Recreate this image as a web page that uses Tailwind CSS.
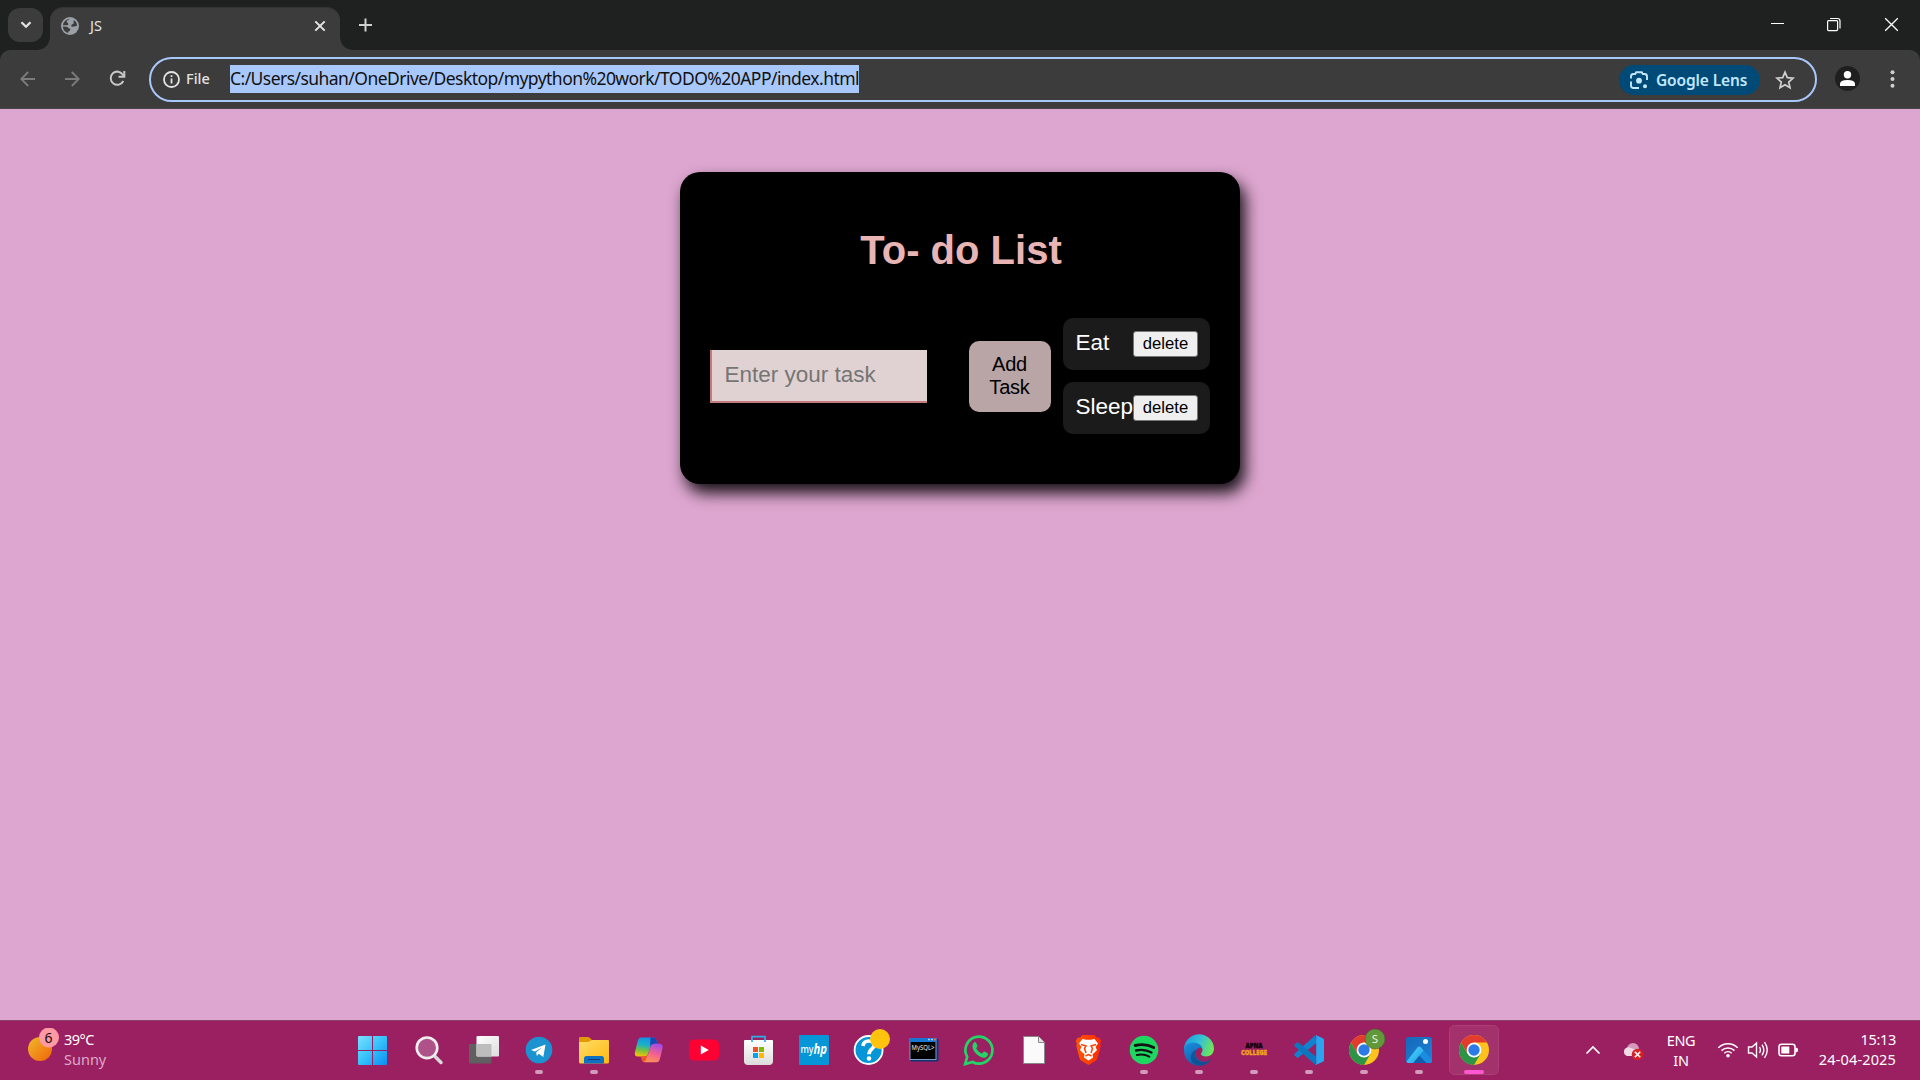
<!DOCTYPE html>
<html lang="en">
<head>
<meta charset="utf-8">
<title>JS</title>
<script src="https://cdn.jsdelivr.net/npm/@tailwindcss/browser@4"></script>
</head>
<body class="w-[1920px] h-[1080px] overflow-hidden flex flex-col bg-[#dda6d0] font-['Noto_Sans',sans-serif]">

<!-- Tab strip -->
<header class="h-[50px] bg-[#1f2120] flex shrink-0">
  <div class="w-[43px] pl-2 pt-2 shrink-0">
    <button class="w-[35px] h-[34px] rounded-xl bg-[#3c3c3c] flex items-center justify-center">
      <svg width="12" height="8" viewBox="0 0 12 8" fill="none" stroke="#e3e3e3" stroke-width="2.3"><path d="M1.500 1.200 6 5.700l4.500-4.500"/></svg>
    </button>
  </div>
  <div class="w-[317px] ml-[-6px] pt-[7px] flex shrink-0">
    <svg class="shrink-0 self-end" width="13" height="15" viewBox="0 0 13 15"><path d="M13 0v15H0Q13 14 13 0Z" fill="#3c3c3c"/></svg>
    <div class="w-[290px] shrink-0 h-[43px] rounded-t-[13px] bg-[#3c3c3c] flex items-center pl-[11px] pr-[14px] pb-[7px] border-t border-[#333]">
      <svg width="18" height="18" viewBox="0 0 18 18"><circle cx="9" cy="9" r="9" fill="#9aa0a6"/><path d="M8.800 1.900C7.600 3 6.400 2.900 5.800 4.300 5.400 5.400 6.600 5.600 7.200 6.500c.6 1-.2 1.600-1.300 1.700L2 8.300A7.100 7.100 0 0 1 8.800 1.900ZM1.900 9.500l3.600.2c1.500.1 1.600 1.600 2.900 1.800 1 .2 1.300.8.700 1.800-.5.800-2 .7-2 2.600A7.100 7.100 0 0 1 1.900 9.500ZM13 3.200c1.800 1.200 3 3.200 3.100 5.300-.8 1-2.200.5-3.200.9-1.200.5-2.500.4-2.700-.6-.2-1.100.9-1.400 1.900-1.800 1.300-.5-.2-2.600.9-3.800Z" fill="#3c3c3c"/></svg>
      <span class="ml-[11px] mb-px text-[14.500px] leading-5 text-[#e3e3e3] grow">JS</span>
      <svg width="12" height="12" viewBox="0 0 12 12" stroke="#e8e8e8" stroke-width="1.900"><path d="m1.300 1.300 9.400 9.400m0-9.400-9.400 9.400"/></svg>
    </div>
    <svg class="shrink-0 self-end" width="13" height="15" viewBox="0 0 13 15"><path d="M0 0v15h13Q0 14 0 0Z" fill="#3c3c3c"/></svg>
  </div>
  <div class="pl-[5px] pt-[18px] grow"><svg width="13" height="14" viewBox="0 0 13 14" stroke="#d0d0d0" stroke-width="2"><path d="M6.500.5v13M0 7h13"/></svg></div>
  <div class="flex gap-[42px] pt-[17px] pr-[21px]">
    <svg width="15" height="15" viewBox="0 0 15 15" stroke="#fff"><path d="M1 6.500h13"/></svg>
    <svg class="relative right-px" width="15" height="15" viewBox="0 0 15 15" stroke="#fff" stroke-width="1.200" fill="none"><rect x="1.600" y="3.600" width="10" height="10" rx="1"/><path d="M4 1.500h7.500q2.500 0 2.500 2.500v7.500"/></svg>
    <svg width="15" height="15" viewBox="0 0 15 15" stroke="#fff" stroke-width="1.300"><path d="m1.200 1.200 12.600 12.600m0-12.600-12.600 12.600"/></svg>
  </div>
</header>

<!-- Toolbar -->
<nav class="h-[59px] bg-[#1f2120] shrink-0">
  <div class="h-[59px] bg-[#3c3c3c] rounded-t-[10px] border-b border-[#474747] flex items-start pl-5 pr-[25px]">
    <svg class="mt-[21px]" width="15" height="16" viewBox="0 0 15 16" fill="none" stroke="#7b7b7b" stroke-width="1.800"><path d="M15 8H1.500M8.200 1 1.300 8l6.900 7"/></svg>
    <svg class="mt-[21px] ml-[30px]" width="15" height="16" viewBox="0 0 15 16" fill="none" stroke="#7b7b7b" stroke-width="1.800"><path d="M0 8h13.500M6.800 1l6.900 7-6.900 7"/></svg>
    <svg class="mt-[20px] ml-[29px]" width="17" height="17" viewBox="0 0 17 17" fill="none" stroke="#c7c7c7" stroke-width="2"><path d="M14.300 11A6.600 6.600 0 1 1 14 4.900L15.300 6.500"/><path d="M15.300 1v5.700H9.500"/></svg>
    <div class="mt-[7px] ml-[23px] w-[1668px] h-[45px] rounded-full border-2 border-[#a8c7fa] flex items-center pl-3 pr-5">
      <svg width="17" height="17" viewBox="0 0 17 17" fill="none" stroke="#e3e3e3" stroke-width="1.800"><circle cx="8.500" cy="8.500" r="7.500"/><path d="M8.500 7.500v5M8.500 4.200v1.900"/></svg>
      <span class="ml-[6px] mb-[3px] w-[44px] text-[14.500px] leading-5 font-medium text-[#e3e3e3]">File</span>
      <span class="mb-px w-[629px] h-7 bg-[#a8c7fa] text-[#111] text-[17.500px] leading-[27px] whitespace-nowrap tracking-[-0.550px]">C:/Users/suhan/OneDrive/Desktop/mypython%20work/TODO%20APP/index.html</span>
      <div class="grow"></div>
      <div class="w-[141px] h-[30px] rounded-full bg-[#004a77] flex items-center pl-[11px] text-[#c2e7ff]">
        <svg width="18" height="18" viewBox="0 0 18 18" fill="none" stroke="#c2e7ff" stroke-width="1.900"><path d="M1 7.500V5.500Q1 3 3.500 3h1.700l1-1.800h5.600l1 1.800h1.700Q17 3 17 5.500V9M1 10.500v4Q1 17 3.500 17H9"/><circle cx="9" cy="9.700" r="2.900" fill="#c2e7ff" stroke="none"/><circle cx="15" cy="15.200" r="2" fill="#c2e7ff" stroke="none"/></svg>
        <span class="ml-2 text-[15.500px] leading-5 font-semibold whitespace-nowrap tracking-[-0.130px]">Google Lens</span>
      </div>
      <svg class="ml-[15px]" width="20" height="20" viewBox="0 0 20 20" fill="none" stroke="#d0d0d0" stroke-width="1.700"><path d="m10 2.200 2.300 5.400 5.800.5-4.400 3.900 1.300 5.700-5-3-5 3L6.300 12 1.900 8.100l5.800-.5Z"/></svg>
    </div>
    <svg class="mt-4 ml-[18px]" width="25" height="25" viewBox="0 0 25 25"><circle cx="12.500" cy="12.500" r="12.500" fill="#1f1f1f"/><g fill="#fff"><circle cx="12.500" cy="8.700" r="3.700"/><path d="M5 20v-2.200Q5 14 12.500 14T20 17.800V20Z"/></g></svg>
    <svg class="mt-5 ml-[30px]" width="5" height="18" viewBox="0 0 5 18" fill="#d0d0d0"><circle cx="2.500" cy="2.200" r="2"/><circle cx="2.500" cy="9" r="2"/><circle cx="2.500" cy="15.800" r="2"/></svg>
  </div>
</nav>

<!-- Page -->
<main class="grow pt-[63px] flex justify-center items-start font-['Liberation_Sans',sans-serif]">
  <section class="w-[560px] h-[312px] rounded-[20px] bg-black px-[30px] pt-[55px] shadow-[5px_9px_16px_rgba(0,0,0,0.9)]">
    <h1 class="pl-[2px] text-center text-[40px] leading-[46px] font-bold text-[#e8b4b4]">To- do List</h1>
    <div class="flex mt-[45px] items-start">
      <input type="text" placeholder="Enter your task" class="mt-8 w-[217px] h-[53px] bg-[#e0d2d2] border-l-2 border-b-2 border-[#c47a7a] pl-[12.500px] pb-[2px] text-[22.500px] placeholder:text-[#757575]">
      <button class="mt-[23px] ml-[42px] w-[82px] h-[71px] rounded-[10px] bg-[#b9a5a5] text-black text-[20px] leading-[23px] pb-[2px] pr-px tracking-[-0.200px]">Add<br>Task</button>
      <ul class="ml-3 w-[147px] flex flex-col gap-3 text-white text-[22.500px] leading-[26px]">
        <li class="h-[52px] rounded-[10px] bg-[#1b1b1b] flex items-center justify-between pl-[12.500px] pr-3"><span class="mb-[2px]">Eat</span><button class="w-[65px] h-[26px] rounded-[3px] border border-[#767676] bg-[#efefef] text-black text-[16.670px] leading-[20px]">delete</button></li>
        <li class="h-[52px] rounded-[10px] bg-[#1b1b1b] flex items-center justify-between pl-[12.500px] pr-3"><span class="mb-[2px]">Sleep</span><button class="w-[65px] h-[26px] shrink-0 rounded-[3px] border border-[#767676] bg-[#efefef] text-black text-[16.670px] leading-[20px]">delete</button></li>
      </ul>
    </div>
  </section>
</main>

<!-- Taskbar -->
<footer class="h-[60px] shrink-0 bg-[#9b2062] border-t border-[#8b4166] flex text-white">
  <div class="w-[346px] shrink-0 pl-7 pt-[7px] flex">
    <svg class="shrink-0" width="32" height="36" viewBox="0 0 32 36"><defs><linearGradient id="sun" x1="0" y1="0" x2="1" y2="1"><stop stop-color="#efb92c"/><stop offset="1" stop-color="#ef6408"/></linearGradient></defs><circle cx="12" cy="21" r="12" fill="url(#sun)"/><circle cx="21" cy="9.500" r="10" fill="#ff99a4"/><text x="20.500" y="14.500" font-size="14" text-anchor="middle" fill="#1a0a0a">6</text></svg>
    <div class="ml-1 mt-px text-[14.500px] leading-5"><div class="tracking-[-0.500px]">39°C</div><div class="text-[#dba9c6]">Sunny</div></div>
  </div>
  <div class="flex w-[1155px] shrink-0 -mt-px">
    <!-- start -->
    <svg class="shrink-0" width="55" height="60" viewBox="0 0 55 60"><defs><linearGradient id="win" gradientUnits="userSpaceOnUse" x1="12" y1="16" x2="41" y2="45"><stop stop-color="#7be0ff"/><stop offset=".5" stop-color="#35c1fb"/><stop offset="1" stop-color="#0a8df2"/></linearGradient></defs><path fill="url(#win)" d="M12 17q0-1 1-1h13v14H12zM27 16h13q1 0 1 1v13H27zM12 31h14v14H13q-1 0-1-1zM27 31h14v13q0 1-1 1H27z"/></svg>
    <!-- search -->
    <svg class="shrink-0" width="55" height="60" viewBox="0 0 55 60"><path d="m34 36.500 6 6" stroke="#d9d9dc" stroke-width="3.500" stroke-linecap="round"/><circle cx="26" cy="27.800" r="10.300" fill="#b0528a" stroke="#eee" stroke-width="2.600"/></svg>
    <!-- task view -->
    <svg class="shrink-0" width="55" height="60" viewBox="0 0 55 60"><defs><linearGradient id="tv" x1="0" y1="0" x2="1" y2="1"><stop stop-color="#fff"/><stop offset="1" stop-color="#ddd"/></linearGradient></defs><rect x="13" y="24" width="22.500" height="19.500" rx="1" fill="#606060"/><rect x="20.500" y="16" width="22.500" height="20.500" rx="1" fill="url(#tv)"/><path d="M20.500 24h15v12.500h-14q-1 0-1-1z" fill="#bdbdbd"/></svg>
    <!-- telegram -->
    <svg class="shrink-0" width="55" height="60" viewBox="0 0 55 60"><circle cx="28" cy="30" r="13.300" fill="#1c93d1"/><path d="M20 30 34.500 24.500 32.300 37 27.800 33.800 25.800 36 25.200 32.200 31 27.500 24 31.500Z" fill="#fff"/><rect x="24" y="50" width="8" height="4" rx="2" fill="#d29abb"/></svg>
    <!-- explorer -->
    <svg class="shrink-0" width="55" height="60" viewBox="0 0 55 60"><defs><linearGradient id="fold" x1="0" y1="0" x2="1" y2="1"><stop stop-color="#ffdc69"/><stop offset="1" stop-color="#ffb90f"/></linearGradient></defs><path d="M13 18q0-1 1-1h8q1 0 2 1l2 2v6H13z" fill="#e09a05"/><path d="M13 23q0-1 1-1h8l4-2h16q1 0 1 1v21q0 1.500-1.500 1.500h-27Q13 43.500 13 42z" fill="url(#fold)"/><path d="M18 43.500v-5q0-2.500 2.500-2.500h15q2.500 0 2.500 2.500v5z" fill="#0f6fc0"/><path d="M22 39.500h12" stroke="#083f7b"/><rect x="24" y="50" width="8" height="4" rx="2" fill="#d29abb"/></svg>
    <!-- copilot -->
    <svg class="shrink-0" width="55" height="60" viewBox="0 0 55 60"><defs><linearGradient id="cp1" x1=".5" y1="0" x2=".3" y2="1"><stop stop-color="#1590e8"/><stop offset=".4" stop-color="#1bb2c4"/><stop offset=".7" stop-color="#7cc23b"/><stop offset="1" stop-color="#f5c20c"/></linearGradient><linearGradient id="cp2" x1=".7" y1="0" x2=".3" y2="1"><stop stop-color="#a44bea"/><stop offset=".5" stop-color="#f2608f"/><stop offset="1" stop-color="#fb9a52"/></linearGradient></defs><path d="M20 17.500h12q2.500 0 3.500 3.500l.8 2.700h-3q-3 0-4 3.500L27 34q-1 2.500-3.500 2.500H17q-4 0-3-4.500l2.700-11q1-3.500 3.300-3.500Z" fill="url(#cp1)"/><path d="M29.500 17.500h3q2.200 0 3 3l.8 3.200H33q-3 0-4 3z" fill="#1747b8"/><path d="M35 23.700h3q4.500 0 3.500 4.500L39 38.700q-1 3.500-3.500 3.500H24q-2.500 0-3.200-3l-.8-2.700h3.500q3 0 4-3.500l2-6q1-3.300 5.500-3.300Z" fill="url(#cp2)"/><path d="M20 36.500h3.500q2 0 3-1.500l-1.700 5q-.8 2-2.300 1.500t-1.700-2.300z" fill="#ec5424"/></svg>
    <!-- youtube -->
    <svg class="shrink-0" width="55" height="60" viewBox="0 0 55 60"><rect x="13" y="19.500" width="30" height="21" rx="5" fill="#ff0033"/><path d="m24.800 25.500 8 4.500-8 4.500z" fill="#fff"/></svg>
    <!-- store -->
    <svg class="shrink-0" width="55" height="60" viewBox="0 0 55 60"><defs><linearGradient id="st" x1="0" y1="0" x2="0" y2="1"><stop stop-color="#fff"/><stop offset="1" stop-color="#dcdcdc"/></linearGradient></defs><path d="M13 21q0-1 1-1h27q1 0 1 1v20q0 4-4 4H17q-4 0-4-4z" fill="url(#st)"/><path d="M21 22v-5.300h13V22" fill="none" stroke="#2eaee6" stroke-width="1.700"/><path d="M22 27h5v5h-5z" fill="#f25022"/><path d="M28 27h5v5h-5z" fill="#7fba00"/><path d="M22 33h5v5h-5z" fill="#00a4ef"/><path d="M28 33h5v5h-5z" fill="#ffb900"/></svg>
    <!-- myhp -->
    <svg class="shrink-0" width="55" height="60" viewBox="0 0 55 60"><rect x="13" y="15" width="30" height="30" rx="1" fill="#0496d6"/><text x="14.500" y="33" font-size="10" font-weight="500" textLength="13" lengthAdjust="spacingAndGlyphs" fill="#fff">my</text><text x="27.500" y="33.500" font-size="15" font-style="italic" font-weight="700" textLength="13.500" lengthAdjust="spacingAndGlyphs" fill="#fff">hp</text></svg>
    <!-- help -->
    <svg class="shrink-0" width="55" height="60" viewBox="0 0 55 60"><circle cx="27.600" cy="30" r="14" fill="#0496d6" stroke="#fff" stroke-width="1.800"/><path d="M22 26q.5-5 5.700-5t5.300 4.300c0 3.700-5 3.700-5 9" fill="none" stroke="#fff" stroke-width="3.600"/><circle cx="28" cy="38.500" r="2.300" fill="#fff"/><circle cx="39" cy="19" r="10" fill="#ffc20e"/></svg>
    <!-- mysql -->
    <svg class="shrink-0" width="55" height="60" viewBox="0 0 55 60"><rect x="14.500" y="19" width="28" height="22.500" rx="1" fill="#12336f"/><rect x="13.500" y="18" width="27" height="22" fill="#7c9cc9"/><rect x="13.500" y="18" width="27" height="4" fill="#1776d2"/><path d="M32 19.500h2m1 0h2" stroke="#a9d1ff" stroke-width="1.500"/><path d="M38 19.500h2" stroke="#f26a3a" stroke-width="2"/><rect x="14.500" y="22" width="25" height="17" fill="#000"/><text x="15.500" y="30" font-size="7.500" textLength="23" lengthAdjust="spacingAndGlyphs" fill="#eee">MySQL&gt;</text></svg>
    <!-- whatsapp -->
    <svg class="shrink-0" width="55" height="60" viewBox="0 0 55 60"><path d="m14.200 44 2-7.200A13.500 13.500 0 1 1 21.500 42z" fill="none" stroke="#25d366" stroke-width="2.700"/><path d="M23 22.500c.8-.7 1.700-.6 2.100.3l1.300 3c.5 1-1.400 2-1.100 2.600 1.200 2.300 3 4 5.500 5 .8.300 1.600-2.300 2.600-1.900l2.900 1.500c1.400.7.300 3.300-1.200 4.200-2.300 1.300-5.800-.1-8.500-2.200-2.700-2.200-5.200-5.600-5.100-8.500 0-1.500.6-3.200 1.500-4Z" fill="#25d366"/></svg>
    <!-- blank document -->
    <svg class="shrink-0" width="55" height="60" viewBox="0 0 55 60"><path d="M17.500 16.500h15l6 6v21h-21z" fill="#fafafa" stroke="#888"/><path d="M32.500 16.500v6h6" fill="#e5e5e5" stroke="#888"/></svg>
    <!-- brave -->
    <svg class="shrink-0" width="55" height="60" viewBox="0 0 55 60"><defs><linearGradient id="br" x1="0" y1="0" x2="1" y2="0"><stop stop-color="#ff5601"/><stop offset="1" stop-color="#ff2a03"/></linearGradient></defs><path d="M21.500 15h12l2.500 2.700 2.200-.2 2 3.500-1 2.500.5 2.500-3 11.500q-.8 2.500-2.500 3.600L27.500 45l-6.700-3.900q-1.700-1.100-2.500-3.600l-3-11.500.5-2.500-1-2.500 2-3.500 2.200.2z" fill="url(#br)"/><path d="m21.500 19 3.500.8h5l3.500-.8 3.500 4.500-2.500 3.500 1.500 3-3 3-1.500 1 .5 3.500-4.500 3-4.500-3 .5-3.500-1.500-1-3-3 1.500-3-2.500-3.500z" fill="#fff"/><path d="m20 24.500 5 1.500-1.500 2.500 1.500 4.500M35 24.500l-5 1.500 1.500 2.500-1.500 4.500M24.500 36l3-1.500 3 1.500" fill="none" stroke="#ff4303" stroke-width="1.500"/></svg>
    <!-- spotify -->
    <svg class="shrink-0" width="55" height="60" viewBox="0 0 55 60"><circle cx="28" cy="30" r="14.300" fill="#1ed760"/><g fill="none" stroke="#121212" stroke-linecap="round"><path d="M19.200 25.500q10-2.500 18.500 2" stroke-width="2.900"/><path d="M20 30.500q8.500-2 15.500 2" stroke-width="2.400"/><path d="M20.800 35q7-1.500 12.500 1.700" stroke-width="2"/></g><rect x="24" y="50" width="8" height="4" rx="2" fill="#d29abb"/></svg>
    <!-- edge -->
    <svg class="shrink-0" width="55" height="60" viewBox="0 0 55 60"><defs><linearGradient id="e1" x1="0" y1=".3" x2="1" y2=".6"><stop stop-color="#1b9de2"/><stop offset=".5" stop-color="#35c1d5"/><stop offset="1" stop-color="#72e84f"/></linearGradient><linearGradient id="e2" x1="0" y1="0" x2=".6" y2="1"><stop stop-color="#1c8fdf"/><stop offset="1" stop-color="#0c59a4"/></linearGradient></defs><path d="M13 30A15 15 0 0 1 43 28.500c0 5-3.500 8-8 8-3 0-5-1-5-2.500 0-1.500 1.500-1.500 1.500-4 0-3-3-6-7-6-6 0-10.500 3-11.500 6Z" fill="url(#e1)"/><path d="M13 30c0-4 4-7.500 9.500-7.500 5 0 8.500 3 9 6.500-3-3-7 0-7 4.500 0 5.500 5 9 10.500 8 2-.4 4-1.300 5.500-2.500A15 15 0 0 1 13 30Z" fill="url(#e2)"/><path d="M26 29.500c-3 4-2 10 3 12 4 1.500 8 .5 11.500-2.500A15 15 0 0 1 28 45c-6 0-9-5-8-9.500.7-3.500 3-5.500 6-6Z" fill="#114a8b" opacity=".7"/><rect x="24" y="50" width="8" height="4" rx="2" fill="#d29abb"/></svg>
    <!-- apna college -->
    <svg class="shrink-0" width="55" height="60" viewBox="0 0 55 60"><text x="19.500" y="28.200" font-size="6.800" font-weight="900" textLength="17" lengthAdjust="spacingAndGlyphs" fill="#110510" stroke="#110510" stroke-width=".5">APNA</text><text x="15" y="34.500" font-size="7" font-weight="900" textLength="26" lengthAdjust="spacingAndGlyphs" fill="#f0a01c" stroke="#f0a01c" stroke-width=".4">COLLEGE</text><rect x="24" y="50" width="8" height="4" rx="2" fill="#d29abb"/></svg>
    <!-- vs code -->
    <svg class="shrink-0" width="55" height="60" viewBox="0 0 55 60"><path d="M36 22.500 17.500 37.500q-.8.600-1.600 0L13.600 35.500q-.9-.9 0-1.700L34 15.500z" fill="#1182d0"/><path d="M36 37.500 17.500 22.500q-.8-.6-1.600 0L13.600 24.500q-.9.900 0 1.700L34 44.500z" fill="#0e76bf"/><path d="M33.500 15.500q.8-.7 1.800-.3l6.500 3q1.200.6 1.200 1.900v19.800q0 1.300-1.200 1.900l-6.500 3q-1 .4-1.800-.3 1.700.9 1.700-1.500V17q0-2.400-1.700-1.500Z" fill="#2aa5f0"/><rect x="24" y="50" width="8" height="4" rx="2" fill="#d29abb"/></svg>
    <!-- chrome, profile -->
    <svg class="shrink-0" width="55" height="60" viewBox="0 0 55 60"><defs><g id="chrome"><circle cx="28" cy="30" r="15" fill="#fcc31e"/><path d="M15 22.500A15 15 0 0 1 41 22.500H28L21.500 33.700Z" fill="#e33b2e"/><path d="M15 22.500A15 15 0 0 0 28 45l6.500-11.300H21.500Z" fill="#2b9447"/><circle cx="28" cy="30" r="7.400" fill="#fff"/><circle cx="28" cy="30" r="5.700" fill="#2a7be8"/></g></defs><use href="#chrome"/><circle cx="39" cy="19" r="10" fill="#63983a" stroke="#44652d" stroke-width=".6"/><text x="39" y="23" font-size="11.500" text-anchor="middle" fill="#e6f0df">S</text><rect x="24" y="50" width="8" height="4" rx="2" fill="#d29abb"/></svg>
    <!-- photos -->
    <svg class="shrink-0" width="55" height="60" viewBox="0 0 55 60"><defs><linearGradient id="ph" x1="0" y1="0" x2="1" y2="1"><stop stop-color="#1669b8"/><stop offset="1" stop-color="#1b82d8"/></linearGradient><linearGradient id="ph2" x1="0" y1="0" x2="1" y2="1"><stop stop-color="#54dcff"/><stop offset="1" stop-color="#1e9be6"/></linearGradient></defs><rect x="15" y="17" width="26" height="26" rx="2.500" fill="url(#ph)"/><path d="M22.500 43 28.500 35.500 36 43Z" fill="#0f5fae"/><path d="m29.500 27 11.500 12.500v1.500q0 2-2 2h-3.500L25 32Z" fill="#1a8de0"/><path d="M15.500 41.500 26.500 27.500q1.800-2 3.500 0l2.500 3L22 43h-4.500q-1.300 0-2-1.500Z" fill="url(#ph2)"/><circle cx="34.500" cy="21.500" r="2.500" fill="#fff"/><rect x="24" y="50" width="8" height="4" rx="2" fill="#d29abb"/></svg>
    <!-- chrome, active -->
    <svg class="shrink-0" width="55" height="60" viewBox="0 0 55 60"><rect x="3.500" y="5.500" width="49" height="49" rx="5" fill="#a3316c" stroke="#ab3f77"/><use href="#chrome"/><rect x="18" y="50" width="20" height="4" rx="2" fill="#ff56d2"/></svg>
  </div>
  <!-- tray -->
  <div class="grow flex text-[14.500px] leading-5">
    <svg class="ml-[84px] mt-[24px] shrink-0" width="16" height="10" viewBox="0 0 16 10" fill="none" stroke="#fff" stroke-width="1.700"><path d="m1.500 8.500 6.500-6.500 6.500 6.500"/></svg>
    <svg class="ml-[21px] mt-[21px] shrink-0" width="22" height="19" viewBox="0 0 22 19"><circle cx="11" cy="7" r="6" fill="#d59ab9"/><path d="M5 14a4.500 4.500 0 0 1 0-8.500q2-.5 4 .5l8 3v5z" fill="#f0dbe6"/><circle cx="15.500" cy="12.500" r="5.800" fill="#d92027"/><path d="m12.800 9.800 5.400 5.400m0-5.400-5.400 5.400" stroke="#fff" stroke-width="1.600"/></svg>
    <div class="ml-[19px] mt-[9px] w-[36px] text-center tracking-[-0.300px]">ENG<br>IN</div>
    <svg class="ml-[18px] mt-[20px] shrink-0" width="22" height="17" viewBox="0 0 22 17" fill="none" stroke="#fff" stroke-width="1.500"><path d="M1.300 6.800a13.500 13.500 0 0 1 19.400 0M4.500 9.600a9.500 9.500 0 0 1 13 0M7.300 12.300a5.400 5.400 0 0 1 7.400 0"/><circle cx="11" cy="14.700" r="1.800" fill="#fff" stroke="none"/></svg>
    <svg class="ml-[8px] mt-[20px] shrink-0" width="22" height="18" viewBox="0 0 22 18" fill="none" stroke="#fff" stroke-width="1.400"><path d="M1.500 6v6H5l4.500 4V2L5 6ZM12.500 6q1.800 3 0 6M15 3.700q3.700 5.300 0 10.600M17.500 1.200q5.500 7.800 0 15.600"/></svg>
    <svg class="ml-[9px] mt-[22px] shrink-0" width="21" height="14" viewBox="0 0 21 14"><rect x="1" y="1.200" width="16" height="11.600" rx="2.500" fill="none" stroke="#fff" stroke-width="1.600"/><rect x="3.300" y="3.500" width="8" height="7" rx=".6" fill="#fff"/><path d="M17.500 4.800h1q1.500 0 1.500 2.200t-1.500 2.200h-1z" fill="#fff"/></svg>
    <div class="ml-auto mr-[24px] mt-2 text-right whitespace-nowrap"><span class="tracking-[-0.300px]">15:13</span><br><span class="tracking-[0.150px]">24-04-2025</span></div>
  </div>
</footer>
</body>
</html>
